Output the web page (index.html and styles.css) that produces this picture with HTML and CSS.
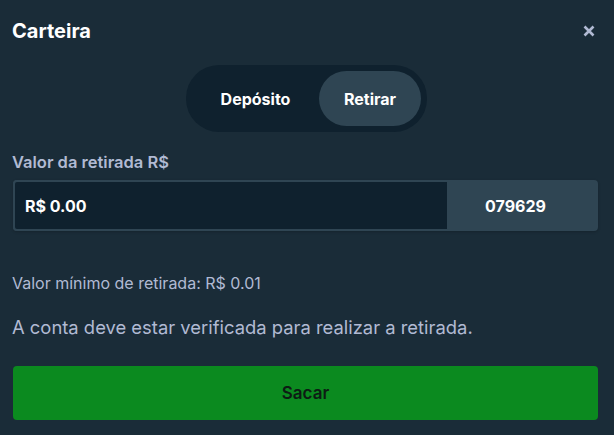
FILE: index.html
```html
<!DOCTYPE html>
<html lang="pt">
<head>
<meta charset="utf-8">
<link rel="stylesheet" href="styles.css">
</head>
<body>
<div class="modal">
  <header class="head">
    <h1 class="title">Carteira</h1>
    <button class="close" aria-label="Fechar">
      <svg width="12" height="12" viewBox="0 0 12 12"><path d="M1.5 1.5 L10.5 10.5 M10.5 1.5 L1.5 10.5" stroke="#b1bad3" stroke-width="2.6" stroke-linecap="butt"/></svg>
    </button>
  </header>
  <div class="tabs-wrap">
    <div class="tabs">
      <button class="tab">Depósito</button>
      <button class="tab active">Retirar</button>
    </div>
  </div>
  <label class="label">Valor da retirada R$</label>
  <div class="field">
    <div class="input">R$ 0.00</div>
    <div class="code">079629</div>
  </div>
  <p class="min">Valor mínimo de retirada: R$ 0.01</p>
  <p class="notice">A conta deve estar verificada para realizar a retirada.</p>
  <button class="submit">Sacar</button>
</div>
</body>
</html>
```
FILE: styles.css
```css
* { box-sizing: border-box; }
html, body { margin: 0; padding: 0; }
body {
  background: #1a2c38;
  font-family: Inter, "Liberation Sans", sans-serif;
  width: 614px;
  height: 435px;
  overflow: hidden;
}
.modal {
  padding: 0 16px 0 12px;
  display: flex;
  flex-direction: column;
}
.head {
  display: flex;
  align-items: center;
  justify-content: space-between;
  height: 62px;
}
.title {
  margin: 0;
  color: #fff;
  font-size: 20px;
  font-weight: 700;
}
.close {
  background: none;
  border: 0;
  padding: 0;
  margin-right: 3px;
  display: flex;
}
.tabs-wrap {
  display: flex;
  justify-content: center;
  padding-left: 3px;
}
.tabs {
  display: flex;
  background: #0f212e;
  border-radius: 33px;
  padding: 6px;
  height: 67px;
  margin-top: 3px;
}
.tab {
  border: 0;
  background: transparent;
  color: #fff;
  font-family: inherit;
  font-weight: 700;
  font-size: 16px;
  border-radius: 28px;
  width: 127px;
  padding: 0;
}
.tab.active {
  background: #2f4553;
  width: 102px;
}
.label {
  color: #b1bad3;
  font-size: 16.5px;
  font-weight: 600;
  margin-top: 20px;
  line-height: 20px;
}
.field {
  display: flex;
  margin-top: 8px;
  margin-left: 1px;
  height: 51px;
  border-radius: 4px;
  background: #2f4553;
  box-shadow: 0 1px 3px rgba(0,0,0,0.2);
}
.input {
  flex: 0 0 436px;
  background: #0f212e;
  border: 2px solid #2f4553;
  border-radius: 4px 0 0 4px;
  color: #fff;
  font-weight: 700;
  font-size: 16px;
  display: flex;
  align-items: center;
  padding-left: 10px;
}
.code {
  flex: 1;
  color: #fff;
  font-weight: 700;
  font-size: 16px;
  display: flex;
  align-items: center;
  padding-left: 36px;
}
.min {
  margin: 42px 0 0;
  color: #b1bad3;
  font-size: 16px;
  line-height: 20px;
}
.notice {
  margin: 22px 0 0;
  color: #b1bad3;
  font-size: 18.4px;
  line-height: 24px;
}
.submit {
  margin: 27px 0 0 1px;
  height: 54px;
  border: 0;
  border-radius: 4px;
  background: #0b8a1f;
  color: #0d1c14;
  font-family: inherit;
  font-size: 17px;
  font-weight: 600;
}
```
